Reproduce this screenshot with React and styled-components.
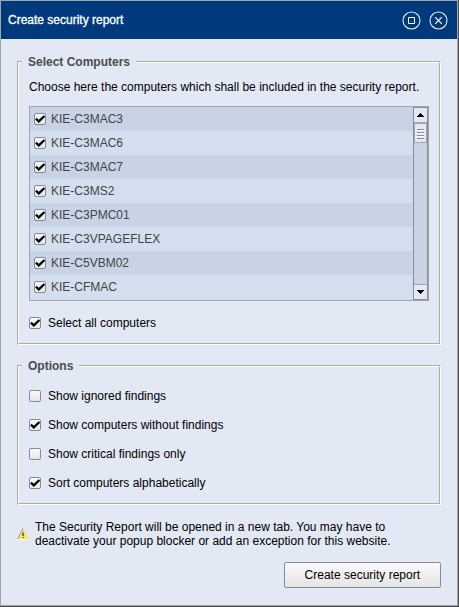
import { useState } from "react";
import styled, { createGlobalStyle } from "styled-components";

const COMPUTERS = [
  "KIE-C3MAC3",
  "KIE-C3MAC6",
  "KIE-C3MAC7",
  "KIE-C3MS2",
  "KIE-C3PMC01",
  "KIE-C3VPAGEFLEX",
  "KIE-C5VBM02",
  "KIE-CFMAC",
];

const OPTIONS = [
  { label: "Show ignored findings", checked: false },
  { label: "Show computers without findings", checked: true },
  { label: "Show critical findings only", checked: false },
  { label: "Sort computers alphabetically", checked: true },
];

const App = () => {
  const [selected, setSelected] = useState(COMPUTERS);
  const [options, setOptions] = useState(OPTIONS);

  const toggleComputer = (name) => {
    setSelected((prev) =>
      prev.includes(name) ? prev.filter((n) => n !== name) : [...prev, name]
    );
  };

  const toggleOption = (label) => {
    setOptions((prev) =>
      prev.map((o) => (o.label === label ? { ...o, checked: !o.checked } : o))
    );
  };

  const allSelected = selected.length === COMPUTERS.length;

  return (
    <>
      <GlobalStyle />
      <Dialog>
        <TitleBar>
          <Title>Create security report</Title>
          <TitleButtons>
            <TitleButton type="button" aria-label="Maximize">
              <svg width="19" height="19" viewBox="0 0 19 19" fill="none">
                <circle cx="9.5" cy="9.5" r="8.5" stroke="#e6edf7" strokeWidth="1.1" />
                <path d="M6.5 6.5h6v6h-6z" stroke="#fff" />
              </svg>
            </TitleButton>
            <TitleButton type="button" aria-label="Close">
              <svg width="19" height="19" viewBox="0 0 19 19" fill="none">
                <circle cx="9.5" cy="9.5" r="8.5" stroke="#e6edf7" strokeWidth="1.1" />
                <path d="M6.2 6.2l6.6 6.6M12.8 6.2l-6.6 6.6" stroke="#fff" strokeWidth="1.2" />
              </svg>
            </TitleButton>
          </TitleButtons>
        </TitleBar>

        <Content>
          <Group>
            <Legend>Select Computers</Legend>
            <Description>
              Choose here the computers which shall be included in the security report.
            </Description>
            <ListBox>
              <List>
                {COMPUTERS.map((name) => (
                  <ListItem key={name}>
                    <CheckLabel $gap="5px">
                      <Checkbox
                        type="checkbox"
                        checked={selected.includes(name)}
                        onChange={() => toggleComputer(name)}
                      />
                      {name}
                    </CheckLabel>
                  </ListItem>
                ))}
              </List>
              <Scrollbar>
                <ScrollButton type="button" aria-label="Scroll up">
                  <svg width="7" height="4" viewBox="0 0 7 4" shapeRendering="crispEdges">
                    <path d="M3 0h1v1h1v1h1v1h1v1H0V3h1V2h1V1h1z" />
                  </svg>
                </ScrollButton>
                <ScrollTrack>
                  <ScrollThumb />
                </ScrollTrack>
                <ScrollButton type="button" aria-label="Scroll down">
                  <svg width="7" height="4" viewBox="0 0 7 4" shapeRendering="crispEdges">
                    <path d="M0 0h7v1H6v1H5v1H4v1H3V3H2V2H1V1H0z" />
                  </svg>
                </ScrollButton>
              </Scrollbar>
            </ListBox>
            <CheckLabel $gap="7px">
              <Checkbox
                type="checkbox"
                checked={allSelected}
                onChange={() => setSelected(allSelected ? [] : COMPUTERS)}
              />
              Select all computers
            </CheckLabel>
          </Group>

          <Group>
            <Legend>Options</Legend>
            <OptionList>
              {options.map(({ label, checked }) => (
                <CheckLabel key={label} $gap="7px">
                  <Checkbox
                    type="checkbox"
                    checked={checked}
                    onChange={() => toggleOption(label)}
                  />
                  {label}
                </CheckLabel>
              ))}
            </OptionList>
          </Group>

          <Notice>
            <svg width="12" height="12" viewBox="0 0 12 12">
              <path d="M6.5 .5L11.6 11.5H.4L5.5 .5z" fill="#f7e763" />
              <path d="M6 .3L.5 11.5" stroke="#9a9a94" fill="none" />
              <path d="M6 .3L11.6 11.5" stroke="#dedbb8" fill="none" />
              <path d="M0 11.5h12" stroke="#fffbe0" />
              <path d="M5.5 4.5h1.1v3.5H5.5zM5.5 9h1.1v1H5.5z" fill="#222" />
            </svg>
            <p>
              The Security Report will be opened in a new tab. You may have to
              deactivate your popup blocker or add an exception for this website.
            </p>
          </Notice>

          <SubmitButton type="button">Create security report</SubmitButton>
        </Content>
      </Dialog>
    </>
  );
};

const GlobalStyle = createGlobalStyle`
  * {
    box-sizing: border-box;
  }
  body {
    margin: 0;
    background: #4b4b4b;
    font-family: "Liberation Sans", Arial, sans-serif;
    font-size: 12px;
    line-height: 14px;
    color: #000;
  }
  svg {
    display: block;
    flex-shrink: 0;
  }
  button {
    font: inherit;
    cursor: pointer;
  }
`;

const Dialog = styled.main`
  min-height: calc(100vh - 1px);
  margin: 0 1px 1px 0;
  border: 1px solid #a5a5a5;
  background: #e2e8f4;
`;

const TitleBar = styled.header`
  display: flex;
  align-items: center;
  justify-content: space-between;
  height: 38px;
  padding: 1px 9px 0 7px;
  background: #003a7d;
`;

const Title = styled.h1`
  margin: 0;
  font-size: 12px;
  font-weight: normal;
  line-height: 15px;
  color: #fff;
  -webkit-text-stroke: 0.3px #fff;
`;

const TitleButtons = styled.div`
  display: flex;
  gap: 8px;
`;

const TitleButton = styled.button`
  padding: 0;
  border: 0;
  background: none;
`;

const Content = styled.div`
  display: flex;
  flex-direction: column;
  padding: 16px;
`;

const Group = styled.fieldset`
  min-width: 0;
  margin: 0 0 14px;
  padding: 0 10px 13px;
  border: 2px groove #fff;
`;

const Legend = styled.legend`
  margin-left: -7px;
  padding: 0 6px;
  font-weight: bold;
  color: #4c4c4c;
`;

const Description = styled.p`
  margin: 11px 0 12px;
`;

const ListBox = styled.div`
  display: flex;
  margin-bottom: 15px;
  border: 1px solid #a5a5a5;
`;

const List = styled.ul`
  flex: 1;
  margin: 0;
  padding: 0 0 1px;
  list-style: none;
  color: #444;
  background: #d3dfef;
`;

const ListItem = styled.li`
  display: flex;
  align-items: center;
  height: 24px;
  padding-left: 4px;
  background: #d3dfef;

  &:nth-child(odd) {
    background: #c8d4e5;
  }
`;

const Scrollbar = styled.div`
  display: flex;
  flex-direction: column;
  width: 15px;
  border: 1px solid #868e9e;
  background: #c8d4e5;
`;

const ScrollButton = styled.button`
  display: flex;
  align-items: center;
  justify-content: center;
  height: 14px;
  padding: 0;
  border: 0;
  background: #e2e8f4;
`;

const ScrollTrack = styled.div`
  flex: 1;
  border: solid #a5a5a5;
  border-width: 1px 0;
`;

/* grip lines are repeated inside the content box only */
const ScrollThumb = styled.div`
  height: 20px;
  padding: 5px 2px 3px;
  border: 1px solid #a5a5a5;
  background: repeating-linear-gradient(#868e9e 0 1px, #fff 1px 2px, #e2e8f4 2px 3px)
      content-box,
    #e2e8f4;
`;

const CheckLabel = styled.label`
  display: flex;
  align-items: center;
  gap: ${({ $gap }) => $gap};
`;

const Checkbox = styled.input`
  appearance: none;
  flex-shrink: 0;
  width: 12px;
  height: 12px;
  margin: 0;
  border: 1px solid #858c9c;
  border-radius: 2px;
  background: linear-gradient(#fbfbfb, #e6e6e6);

  &:checked {
    background: url("data:image/svg+xml,%3Csvg xmlns='http://www.w3.org/2000/svg' viewBox='0 0 10 10'%3E%3Cpath d='M.9 4.6L3.8 7.4L9.4 2' fill='none' stroke='black' stroke-width='2.2'/%3E%3C/svg%3E")
        center / 10px 10px no-repeat,
      linear-gradient(#fbfbfb, #e6e6e6);
  }
`;

const OptionList = styled.div`
  display: flex;
  flex-direction: column;
  gap: 15px;
  padding-top: 16px;
`;

const Notice = styled.div`
  display: flex;
  align-items: center;
  gap: 6px;
  margin: 1px 0 14px;

  & > p {
    max-width: 360px;
    margin: 0;
  }
`;

const SubmitButton = styled.button`
  align-self: flex-end;
  height: 26px;
  padding: 0 20px;
  border: 1px solid #858c9c;
  border-radius: 2px;
  background: linear-gradient(#fafafa, #e4e4e4);
  color: #000;
`;

export default App;
